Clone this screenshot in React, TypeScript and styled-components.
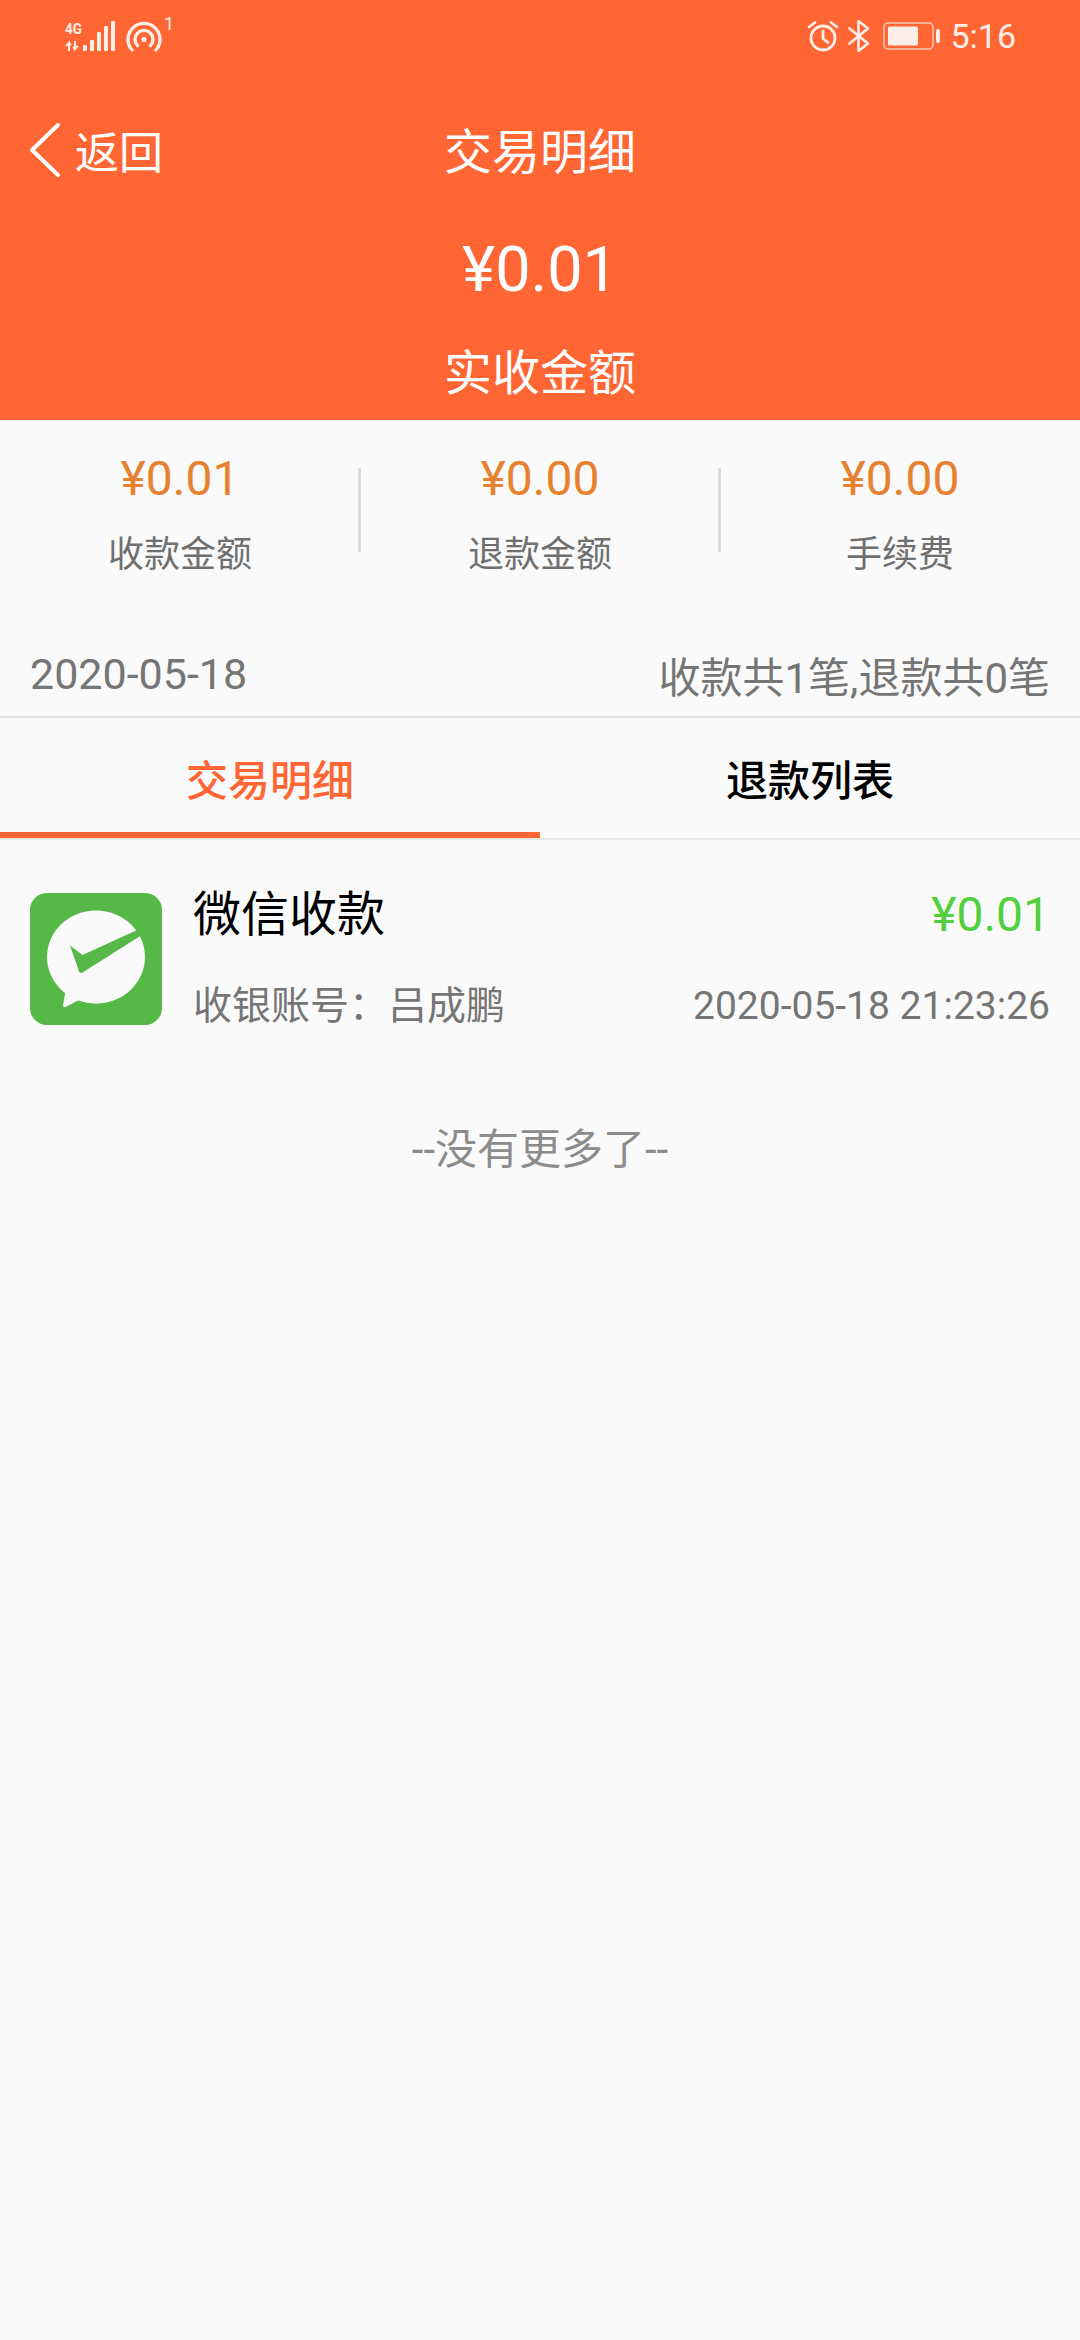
import React from "react";
import styled, { createGlobalStyle } from "styled-components";

const GlobalStyle = createGlobalStyle`
  html, body {
    margin: 0;
    padding: 0;
    background: #fafafa;
  }
  body {
    font-family: Roboto, "Noto Sans CJK SC", sans-serif;
  }
`;

const summary = [
  { amount: "¥0.01", label: "收款金额" },
  { amount: "¥0.00", label: "退款金额" },
  { amount: "¥0.00", label: "手续费" },
];

export default function App() {
  return (
    <Page>
      <GlobalStyle />
      <Header>
        <StatusBar>
          <StatusGroup>
            <SignalIcon />
            <HotspotIcon />
          </StatusGroup>
          <StatusGroup>
            <AlarmIcon />
            <BluetoothIcon />
            <BatteryIcon />
            <Clock>5:16</Clock>
          </StatusGroup>
        </StatusBar>
        <NavBar>
          <BackButton>
            <svg width="34" height="56" viewBox="0 0 34 56" fill="none">
              <path
                d="M30 3 L4 28 L30 53"
                stroke="#fff"
                strokeWidth="4"
                strokeLinecap="round"
                strokeLinejoin="round"
              />
            </svg>
            <BackText>返回</BackText>
          </BackButton>
          <NavTitle>交易明细</NavTitle>
        </NavBar>
        <HeaderAmount>¥0.01</HeaderAmount>
        <HeaderLabel>实收金额</HeaderLabel>
      </Header>

      <SummaryRow>
        {summary.map((item) => (
          <SummaryCell key={item.label}>
            <SummaryAmount>{item.amount}</SummaryAmount>
            <SummaryLabel>{item.label}</SummaryLabel>
          </SummaryCell>
        ))}
      </SummaryRow>

      <DateRow>
        <DateText $size={43}>2020-05-18</DateText>
        <DateText $size={42}>收款共1笔,退款共0笔</DateText>
      </DateRow>

      <Tabs>
        <Tab $active>交易明细</Tab>
        <Tab>退款列表</Tab>
      </Tabs>

      <Record>
        <WeChatIcon />
        <RecordBody>
          <RecordLine>
            <RecordTitle>微信收款</RecordTitle>
            <RecordAmount>¥0.01</RecordAmount>
          </RecordLine>
          <RecordLine>
            <RecordMeta>收银账号：吕成鹏</RecordMeta>
            <RecordMeta>2020-05-18 21:23:26</RecordMeta>
          </RecordLine>
        </RecordBody>
      </Record>

      <EndNote>--没有更多了--</EndNote>
    </Page>
  );
}

function SignalIcon() {
  return (
    <svg width="52" height="32" viewBox="0 0 52 32" fill="#fdeee8">
      <text
        x="1"
        y="14"
        fontSize="15"
        fontWeight="700"
        fontFamily="Roboto, sans-serif"
        textLength="17"
        lengthAdjust="spacingAndGlyphs"
      >
        4G
      </text>
      {/* up and down traffic arrows */}
      <path d="M5 31V23L2 26M5 23l2 2" fill="none" stroke="#fdeee8" strokeWidth="2" />
      <path d="M11 21v8l3-3M11 29l-2-2" fill="none" stroke="#fdeee8" strokeWidth="2" />
      <rect x="19" y="25" width="4" height="6" rx="1" />
      <rect x="26" y="20" width="4" height="11" rx="1" />
      <rect x="33" y="12" width="4" height="19" rx="1" />
      <rect x="40" y="6" width="4" height="25" rx="1" />
      <rect x="47" y="1" width="4" height="30" rx="1" />
    </svg>
  );
}

function HotspotIcon() {
  return (
    <HotspotWrap>
      <svg width="36" height="34" viewBox="0 0 36 34" fill="none" stroke="#fdeee8" strokeWidth="3.4">
        <path d="M6 31a16 16 0 1 1 24 0" strokeLinecap="round" />
        <path d="M11.500 26.600a9 9 0 1 1 13 0" strokeLinecap="round" />
        <circle cx="18" cy="20.400" r="2.600" fill="#fdeee8" stroke="none" />
      </svg>
      <HotspotCount>1</HotspotCount>
    </HotspotWrap>
  );
}

function AlarmIcon() {
  return (
    <svg width="32" height="32" viewBox="0 0 32 32" fill="none" stroke="#fdeee8" strokeWidth="2.8">
      <circle cx="16" cy="18" r="12" />
      <path d="M16 11v7.500l5 4" strokeLinecap="round" strokeLinejoin="round" />
      <path d="M2 7l6-4.500M30 7l-6-4.500" strokeLinecap="round" />
    </svg>
  );
}

function BluetoothIcon() {
  return (
    <svg width="26" height="32" viewBox="0 0 26 32" fill="none" stroke="#fdeee8" strokeWidth="2.6">
      <path d="M1.500 8.500L20 23.500 10.500 31V1L20 8.500 1.500 23.500" strokeLinejoin="round" strokeLinecap="round" />
    </svg>
  );
}

function BatteryIcon() {
  return (
    <svg width="58" height="28" viewBox="0 0 58 28" fill="none">
      <rect x="1" y="1" width="49" height="26" rx="4" stroke="#fbc9b6" strokeWidth="1.500" />
      <rect x="5" y="4.500" width="30" height="19" rx="1.500" fill="#fdeee8" />
      <rect x="53" y="7" width="4" height="14" rx="2" fill="#fdeee8" />
    </svg>
  );
}

// 微信收款 tile: speech bubble with a tick cut through it
function WeChatIcon() {
  return (
    <TileIcon width="132" height="132" viewBox="0 0 132 132">
      <rect width="132" height="132" rx="17" fill="#56b847" />
      <ellipse cx="66" cy="64" rx="49" ry="46.500" fill="#fafafa" />
      <path
        d="M36 98 L33.500 112.500 Q33.500 114.500 35.500 113.500 L49 106.500 Z"
        fill="#fafafa"
        stroke="#fafafa"
        strokeLinejoin="round"
      />
      <path
        d="M40 52.500 L52.500 62 L105 38 L118 32 L109.500 43.500 L52.500 79.500 Q50 80.500 49 78.500 Z"
        fill="#56b847"
      />
    </TileIcon>
  );
}

const Page = styled.div`
  width: 1080px;
  min-height: 2340px;
  background: #fafafa;
  overflow: hidden;
`;

const Header = styled.header`
  height: 420px;
  background: #ff6634;
  color: #fff;
  display: flex;
  flex-direction: column;
  align-items: center;
`;

const StatusBar = styled.div`
  align-self: stretch;
  height: 72px;
  padding: 0 64px;
  display: flex;
  align-items: center;
  justify-content: space-between;
`;

const StatusGroup = styled.div`
  display: flex;
  align-items: center;
  gap: 9px;
`;

const HotspotWrap = styled.span`
  position: relative;
  display: flex;
  margin-left: 1px;
`;

const HotspotCount = styled.span`
  position: absolute;
  top: -6px;
  right: -12px;
  font-size: 18px;
  color: #fdeee8;
`;

const Clock = styled.span`
  font-size: 34px;
  color: #fdeee8;
`;

const NavBar = styled.div`
  align-self: stretch;
  position: relative;
  height: 80px;
  margin-top: 36px;
  display: flex;
  align-items: center;
  justify-content: center;
`;

const BackButton = styled.div`
  position: absolute;
  left: 28px;
  top: 10px;
  display: flex;
  align-items: center;
  gap: 13px;
`;

const BackText = styled.span`
  font-size: 44px;
`;

const NavTitle = styled.h1`
  margin: 0;
  font-size: 48px;
  font-weight: 400;
`;

const HeaderAmount = styled.div`
  margin-top: 44px;
  font-size: 63px;
  line-height: 76px;
`;

const HeaderLabel = styled.div`
  margin-top: 34px;
  font-size: 48px;
  line-height: 64px;
`;

const SummaryRow = styled.section`
  display: grid;
  grid-template-columns: repeat(3, 1fr);
  padding-top: 33px;
  height: 124px;
`;

const SummaryCell = styled.div`
  position: relative;
  display: flex;
  flex-direction: column;
  align-items: center;
  gap: 25px;

  & + &::before {
    content: "";
    position: absolute;
    left: -2px;
    top: 15px;
    width: 3px;
    height: 84px;
    background: #dcdcdc;
  }
`;

const SummaryAmount = styled.div`
  font-size: 48px;
  line-height: 52px;
  color: #e8812f;
`;

const SummaryLabel = styled.div`
  font-size: 36px;
  line-height: 50px;
  color: #6f6f6f;
`;

const DateRow = styled.div`
  height: 84px;
  margin-top: 55px;
  padding: 0 30px;
  display: flex;
  align-items: center;
  justify-content: space-between;
  border-bottom: 2px solid #e2e2e2;
`;

const DateText = styled.span<{ $size: number }>`
  font-size: ${(p) => p.$size}px;
  color: #757575;
`;

const Tabs = styled.nav`
  display: grid;
  grid-template-columns: 1fr 1fr;
  height: 120px;
  border-bottom: 2px solid #e6e6e6;
`;

const Tab = styled.div<{ $active?: boolean }>`
  display: flex;
  align-items: center;
  justify-content: center;
  padding-top: 4px;
  font-size: 42px;
  font-weight: 500;
  color: ${(p) => (p.$active ? "#ff6634" : "#000")};
  border-bottom: 6px solid ${(p) => (p.$active ? "#ff6634" : "transparent")};
`;

const Record = styled.article`
  display: flex;
  align-items: flex-start;
  gap: 31px;
  padding: 53px 30px 0;
`;

const TileIcon = styled.svg`
  flex: none;
`;

const RecordBody = styled.div`
  flex: 1;
  display: flex;
  flex-direction: column;
  gap: 47px;
`;

const RecordLine = styled.div`
  display: flex;
  align-items: center;
  justify-content: space-between;
`;

const RecordTitle = styled.span`
  font-size: 48px;
  line-height: 44px;
  color: #000;
`;

const RecordAmount = styled.span`
  font-size: 48px;
  line-height: 44px;
  color: #4fd03c;
`;

const RecordMeta = styled.span`
  font-size: 39px;
  line-height: 44px;
  color: #757575;
`;

const EndNote = styled.div`
  margin-top: 94px;
  text-align: center;
  font-size: 42px;
  line-height: 56px;
  color: #8c8c8c;
`;
